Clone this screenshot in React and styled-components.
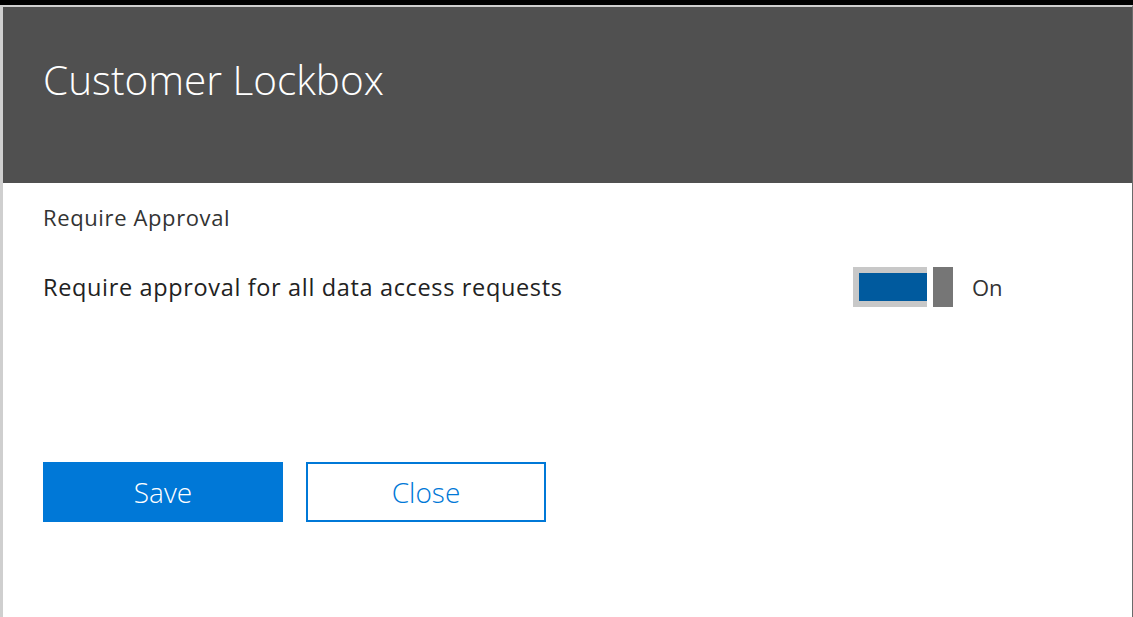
import React from "react";
import styled, { createGlobalStyle } from "styled-components";

const Global = createGlobalStyle`
  html, body { margin: 0; padding: 0; background: #000; }
  body { font-family: "Open Sans", "Noto Sans", sans-serif; }
`;

const Frame = styled.div`
  width: 1133px;
  height: 617px;
  box-sizing: border-box;
  padding-top: 5px;
  background: #000;
  display: flex;
  flex-direction: column;
  overflow: hidden;
`;

const Panel = styled.div`
  flex: 1;
  display: flex;
  flex-direction: column;
  background: #fff;
  border-top: 2px solid #cfcfcf;
  border-left: 3px solid #cfcfcf;
  border-right: 1px solid #6a6a6a;
`;

const Header = styled.header`
  height: 176px;
  background: #505050;
  display: flex;
  align-items: flex-start;
  padding: 46px 0 0 40px;
  box-sizing: border-box;
`;

const Title = styled.h1`
  margin: 0;
  font-family: "Open Sans", sans-serif;
  font-weight: 300;
  font-size: 40.5px;
  line-height: 54px;
  color: #fff;
`;

const Body = styled.main`
  display: flex;
  flex-direction: column;
  padding: 19px 0 0 40px;
`;

const Section = styled.div`
  font-size: 22px;
  letter-spacing: 0.62px;
  line-height: 30px;
  color: #333;
`;

const SettingRow = styled.div`
  display: flex;
  align-items: center;
  margin-top: 35px;
  width: 989px;
`;

const SettingLabel = styled.div`
  flex: 1;
  font-size: 23.5px;
  letter-spacing: 0.65px;
  line-height: 30px;
  color: #222;
`;

const Toggle = styled.div`
  display: flex;
  align-items: center;
  gap: 6px;
`;

const Track = styled.div`
  width: 74px;
  height: 40px;
  box-sizing: border-box;
  background: #c8c8c8;
  padding: 6px 0 6px 6px;
  display: flex;
`;

const Fill = styled.div`
  flex: 1;
  background: #005a9e;
`;

const Thumb = styled.div`
  width: 20px;
  height: 40px;
  background: #767676;
`;

const State = styled.span`
  margin-left: 13px;
  font-size: 22px;
  color: #333;
  width: 60px;
`;

const Actions = styled.div`
  display: flex;
  gap: 23px;
  margin-top: 155px;
`;

const Button = styled.button`
  width: 240px;
  height: 60px;
  box-sizing: border-box;
  font-family: "Open Sans", sans-serif;
  font-weight: 300;
  font-size: 28px;
  border: 2px solid #0078d7;
  background: ${(p) => (p.$primary ? "#0078d7" : "#fff")};
  color: ${(p) => (p.$primary ? "#fff" : "#0078d7")};
  padding: 0;
  cursor: pointer;
`;

export default function App() {
  return (
    <>
      <Global />
      <Frame>
        <Panel>
          <Header>
            <Title>Customer Lockbox</Title>
          </Header>
          <Body>
            <Section>Require Approval</Section>
            <SettingRow>
              <SettingLabel>Require approval for all data access requests</SettingLabel>
              <Toggle>
                <Track>
                  <Fill />
                </Track>
                <Thumb />
                <State>On</State>
              </Toggle>
            </SettingRow>
            <Actions>
              <Button $primary>Save</Button>
              <Button>Close</Button>
            </Actions>
          </Body>
        </Panel>
      </Frame>
    </>
  );
}
